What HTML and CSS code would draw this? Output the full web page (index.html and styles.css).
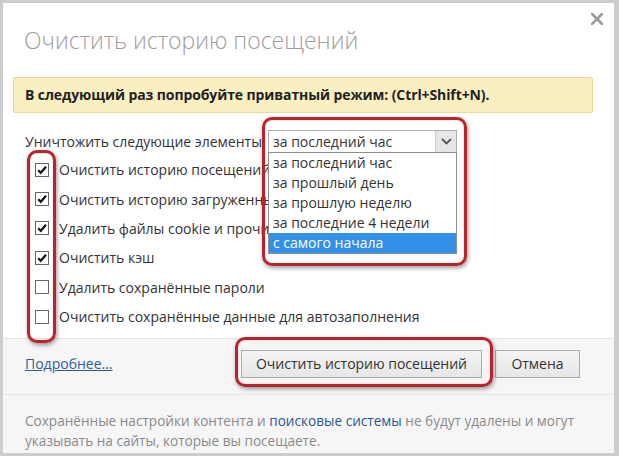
FILE: index.html
```html
<!DOCTYPE html>
<html lang="ru">
<head>
    <meta charset="UTF-8">
    <title>Очистить историю посещений</title>
    <link rel="stylesheet" href="styles.css">
</head>
<body>

    <div class="dialog">
        <div class="header">
            <h1 class="title">Очистить историю посещений</h1>
            <button class="close" title="Закрыть">
                <svg width="12" height="12" viewBox="0 0 12 12"><path d="M1 1L11 11M11 1L1 11" stroke="#9a9a9a" stroke-width="2.6" stroke-linecap="square"/></svg>
            </button>
        </div>

        <div class="banner">В следующий раз попробуйте приватный режим: (Ctrl+Shift+N).</div>

        <div class="period-row">
            <span class="period-label">Уничтожить следующие элементы:</span>
            <div class="select">
                <span class="select-value">за последний час</span>
                <span class="select-arrow">
                    <svg width="11" height="7" viewBox="0 0 11 7"><path d="M1 1L5.5 5.5L10 1" fill="none" stroke="#555" stroke-width="1.8"/></svg>
                </span>
                <ul class="select-list">
                    <li>за последний час</li>
                    <li>за прошлый день</li>
                    <li>за прошлую неделю</li>
                    <li>за последние 4 недели</li>
                    <li class="selected">с самого начала</li>
                </ul>
            </div>
        </div>

        <ul class="options">
            <li><span class="check checked"></span>Очистить историю посещений</li>
            <li><span class="check checked"></span>Очистить историю загруженных файлов</li>
            <li><span class="check checked"></span>Удалить файлы cookie и прочие данные сайтов и плагинов</li>
            <li><span class="check checked"></span>Очистить кэш</li>
            <li><span class="check"></span>Удалить сохранённые пароли</li>
            <li><span class="check"></span>Очистить сохранённые данные для автозаполнения</li>
        </ul>

        <div class="footer">
            <div class="actions">
                <a href="#" class="more">Подробнее...</a>
                <button class="btn btn-main">Очистить историю посещений</button>
                <button class="btn">Отмена</button>
            </div>
            <p class="note">Сохранённые настройки контента и <a href="#">поисковые системы</a> не будут удалены и могут<br>указывать на сайты, которые вы посещаете.</p>
        </div>

        <!-- red marks drawn over the screenshot -->
        <div class="mark mark-select"></div>
        <div class="mark mark-checks"></div>
        <div class="mark mark-button"></div>
    </div>

</body>
</html>
```

FILE: styles.css
```css
* {
    margin: 0;
    padding: 0;
    box-sizing: border-box;
}

body {
    width: 619px;
    height: 456px;
    padding: 3px 5px 3px 3px;
    background-color: #cdcdcd;
    font-family: 'Open Sans', 'Noto Sans', sans-serif;
    font-size: 14px;
    color: #333;
    overflow: hidden;
}

.dialog {
    position: relative;
    height: 450px;
    background-color: #fff;
    display: flex;
    flex-direction: column;
}

.header {
    height: 74px;
    padding: 21px 0 0 21px;
}

.title {
    font-size: 23px;
    font-weight: 300;
    line-height: 32px;
    color: #9d9d9d;
    white-space: nowrap;
}

.close {
    position: absolute;
    top: 10px;
    right: 11px;
    width: 12px;
    height: 12px;
    border: none;
    background: none;
    display: flex;
}

.banner {
    height: 36px;
    margin: 0 21px 0 10px;
    padding-left: 11px;
    background-color: #faefc1;
    border: 1px solid #e6d9a2;
    border-radius: 2px;
    font-size: 14px;
    font-weight: 700;
    line-height: 33px;
    letter-spacing: -0.1px;
    color: #222;
    white-space: nowrap;
}

.period-row {
    display: flex;
    align-items: center;
    height: 24px;
    margin-top: 16px;
    padding-left: 22px;
}

.period-label {
    width: 243px;
    white-space: nowrap;
}

.select {
    position: relative;
    width: 189px;
    height: 23px;
    border: 1px solid #acacac;
    display: flex;
    align-items: center;
    background-color: #fff;
}

.select-value {
    flex: 1;
    padding-left: 4px;
}

.select-arrow {
    width: 21px;
    height: 100%;
    background-color: #e6e6e6;
    border-left: 1px solid #cfcfcf;
    display: flex;
    align-items: center;
    justify-content: center;
}

.select-list {
    position: absolute;
    top: 21px;
    left: -1px;
    width: 189px;
    list-style: none;
    background-color: #fff;
    border: 1px solid #8d8d8d;
    z-index: 2;
}

.select-list li {
    height: 20px;
    line-height: 20px;
    padding-left: 4px;
}

.select-list li.selected {
    background-color: #3390e9;
    color: #fff;
}

.options {
    list-style: none;
    margin-top: 2px;
    padding-left: 32px;
}

.options li {
    display: flex;
    align-items: center;
    width: 410px;
    height: 29.4px;
    white-space: nowrap;
    overflow: hidden;
}

.check {
    width: 14px;
    height: 14px;
    margin-right: 10px;
    border: 1px solid #666;
    background-color: #fff;
    flex-shrink: 0;
}

.check.checked {
    background: #fff url("data:image/svg+xml,%3Csvg xmlns='http://www.w3.org/2000/svg' width='12' height='12'%3E%3Cpath d='M2.2 6.2L4.8 8.8L10 2.8' fill='none' stroke='%23111' stroke-width='2.2'/%3E%3C/svg%3E") center no-repeat;
}

.footer {
    margin-top: auto;
    height: 115px;
    background-color: #f6f6f6;
    border-top: 1px solid #e4e4e4;
}

.actions {
    display: flex;
    align-items: center;
    height: 56px;
    padding: 0 34px 6px 22px;
    border-bottom: 1px solid #e4e4e4;
}

.more {
    color: #2d5e99;
    margin-right: auto;
}

.btn {
    height: 28px;
    padding: 0 10px;
    font-family: inherit;
    font-size: 14px;
    color: #333;
    background: linear-gradient(#f4f4f4, #e6e6e6);
    border: 1px solid #acacac;
}

.btn-main {
    width: 241px;
    margin-right: 13px;
}

.btn + .btn {
    width: 85px;
}

.note {
    padding: 16px 0 0 22px;
    font-size: 13.6px;
    line-height: 20px;
    color: #8a8a8a;
    white-space: nowrap;
}

.note a {
    color: #2b5895;
    text-decoration: none;
}

.mark {
    position: absolute;
    border: 3px solid #b9232b;
    border-radius: 10px;
    box-shadow: 1px 2px 4px rgba(0, 0, 0, 0.4), inset 0 0 2px rgba(0, 0, 0, 0.2);
    z-index: 3;
}

.mark-select {
    left: 259px;
    top: 114px;
    width: 205px;
    height: 149px;
}

.mark-checks {
    left: 24px;
    top: 147px;
    width: 29px;
    height: 193px;
}

.mark-button {
    left: 232px;
    top: 334px;
    width: 258px;
    height: 50px;
}
```
